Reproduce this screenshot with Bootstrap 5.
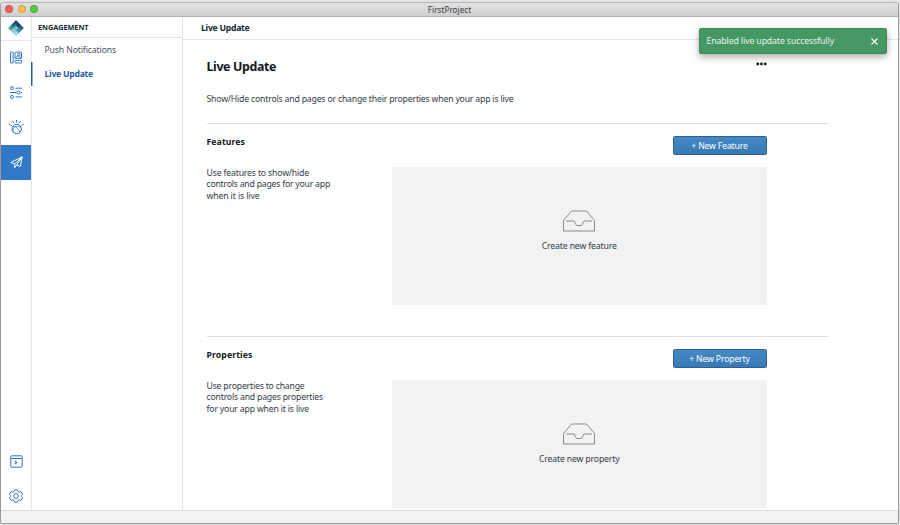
<!DOCTYPE html>
<html lang="en">
<head>
<meta charset="utf-8">
<meta name="viewport" content="width=device-width, initial-scale=1">
<title>FirstProject</title>
<link href="https://cdn.jsdelivr.net/npm/bootstrap@5.3.0/dist/css/bootstrap.min.css" rel="stylesheet">
<style>
html,body{height:100%}
body{font:8.7px/11.5px "Noto Sans","Open Sans",sans-serif;color:#323c47;background:#e4e4e4;overflow:hidden;padding:2px 1px 1px 0}
.window{height:522px;border:1px solid #9b9b9b;border-top-color:#b5b5b5;border-radius:4px 4px 2px 2px;background:#fff}
.titlebar{height:14px;background:linear-gradient(#e2e2e2,#cecece);border-bottom:1px solid #b4b4b4;flex:none;font-size:8.2px;line-height:13px;color:#3c3c3c}
.lights{left:4px;top:2px;gap:4.6px}
.lights i{width:8px;height:8px;border-radius:50%;border:.5px solid #0002}
.rail{width:31px;border-right:1px solid #e3e5e7;color:#3178c6;flex:none}
.rail a{height:35px;color:inherit;padding-bottom:1px}
.rail a.current{background:#3178c6;color:#fff}
.rail .brand{height:24px;border-bottom:1px solid #e3e5e7;margin-bottom:-1px;padding-bottom:1px}
.rail svg{fill:none;stroke:currentColor;stroke-width:1;display:block}
.rail .tools{margin-bottom:-4px}
.side{width:151px;border-right:1px solid #e3e5e7;flex:none}
.side h2{font-size:7.3px;line-height:21px;height:21px;color:#152935;padding-left:6px;border-bottom:1px solid #e3e5e7}
.side a{height:24px;line-height:24px;padding-left:12.5px;color:#4a545d}
.side a.current{color:#2a5caa;box-shadow:-1px 0 #2a5caa,inset .5px 0 #2a5caa}
.crumb{height:23px;line-height:22px;border-bottom:1px solid #e3e5e7;padding-left:18px;color:#152935}
.content{padding-left:23.5px;height:468px}
.intro{height:83px;width:622.5px;color:#323c47}
.intro h1{font-size:12.4px;line-height:16px;color:#111920;padding-top:19px}
.intro p{margin-top:19px}
.dots{padding:22px 62px 0 0}
.block{width:622.5px;height:213px;border-top:1px solid #dedfe0}
.block h3{font-size:8.7px;line-height:12px;color:#111920;margin:12px 0 0}
.block p{margin-top:20px;line-height:11.3px}
.about{width:185.5px}
.panel{width:374.5px}
.btn-new{width:94px;height:19px;margin-top:12px;background:linear-gradient(#4789c3,#3679b5);border:1px solid #27639b;border-radius:1.5px;color:#fff;font-size:8.7px;line-height:17px;padding:1px 0 0}
.btn-new:hover{color:#fff}
.blank{height:138px;margin-top:12px;background:#f2f2f2;border-radius:2px;padding-top:43px}
.blank svg{fill:none;stroke:#8b8b8b;margin-bottom:9px}
.statusbar{height:13px;background:#f2f2f2;border-top:1px solid #dcdcdc;flex:none}
.notice{left:699px;top:28px;width:188px;height:26px;background:#459763;border:1px solid #3b8a58;border-radius:2px;color:#e9f4ed;box-shadow:0 3px 7px #0005;padding:0 8px 0 6.5px}
.notice .t{padding-top:2px}
.t{white-space:nowrap;display:inline-block}
</style>
<script src="https://cdn.jsdelivr.net/npm/bootstrap@5.3.0/dist/js/bootstrap.bundle.min.js"></script>
</head>
<body>
<div class="window d-flex flex-column overflow-hidden">
  <header class="titlebar position-relative text-center">
    <div class="lights position-absolute d-flex"><i style="background:#ee6258"></i><i style="background:#f6bd4a"></i><i style="background:#5ac648"></i></div>
    <span class="t" data-w="43.5">FirstProject</span>
  </header>
  <div class="d-flex flex-grow-1 overflow-hidden">
    <nav class="rail d-flex flex-column">
      <div class="brand d-flex justify-content-center align-items-center">
        <svg width="16" height="16" viewBox="0 0 16 16"><g style="stroke:none">
          <path fill="#5fa9c0" d="M8 .3L15.7 8 8 15.7.3 8z"/>
          <path fill="#1b4477" d="M8 .3l2.6 2.5L8 5.4 5.4 2.8z"/><path fill="#2c668b" d="M5.4 2.8L8 5.4 5.4 8 2.8 5.4z"/><path fill="#153c6b" d="M10.6 2.8l2.6 2.6L10.6 8 8 5.4z"/>
          <path fill="#3a9d9c" d="M2.8 5.4L5.4 8l-2.6 2.6L.3 8z"/><path fill="#75b9cd" d="M8 5.4L10.6 8 8 10.6 5.4 8z"/><path fill="#34618c" d="M13.2 5.4L15.7 8l-2.5 2.6L10.6 8z"/>
          <path fill="#8bcdcf" d="M5.4 8L8 10.6l-2.6 2.6-2.6-2.6z"/><path fill="#3c91af" d="M10.6 8l2.6 2.6-2.6 2.6L8 10.6z"/><path fill="#a8d9dc" d="M8 10.6l2.6 2.6L8 15.7l-2.6-2.5z"/></g></svg>
      </div>
      <a href="#" class="d-flex justify-content-center align-items-center">
        <svg width="12" height="13" viewBox="0 0 12 13"><rect x=".5" y="1" width="2.6" height="11" rx=".4"/><rect x="5" y="1" width="6.5" height="6.4" rx=".4"/><rect x="5" y="9.4" width="6.5" height="2.6" rx=".4"/><circle cx="8.9" cy="3.6" r="1.3"/><path d="M5 7l3-2.4L11 7"/></svg></a>
      <a href="#" class="d-flex justify-content-center align-items-center">
        <svg width="12" height="13" viewBox="0 0 12 13"><circle cx="2" cy="2.2" r="1.5"/><path d="M5.5 2.2H12M0 6.5h6.5M10.5 6.5H12M5.5 10.9H12"/><circle cx="8.5" cy="6.5" r="1.6"/><circle cx="2" cy="10.9" r="1.5"/></svg></a>
      <a href="#" class="d-flex justify-content-center align-items-center">
        <svg width="15" height="15" viewBox="0 0 15 15"><circle cx="7.7" cy="9" r="4.7"/><path d="M4 7c2-2 5 1 6.8 5.2M5.2 12.6C3 10.5 4 7.5 7 6.4c2-.6 3.6 0 4.5 1.4" stroke-width=".8"/><path d="M7.5 0v2.5M3.5 1l1.3 2.3M11.5 1l-1.3 2.3M.3 4.3l2.3 1.2M14.7 4.3l-2.3 1.2"/></svg></a>
      <a href="#" class="current d-flex justify-content-center align-items-center">
        <svg width="13" height="13" viewBox="0 0 13 13" stroke-linejoin="round"><path d="M.8 6.5L12.2.8 10.3 10.6 6.7 8.9 4.7 11.8V8zM12.2.8L4.7 8M12.2.8L6.7 8.9"/></svg></a>
      <div class="tools mt-auto">
      <a href="#" class="d-flex justify-content-center align-items-center">
        <svg width="13" height="13" viewBox="0 0 13 13"><rect x=".8" y=".8" width="11.4" height="11.4" rx=".8"/><path d="M.8 3.5h11.4M4.8 6l2 1.5-2 1.5" stroke-width="1.1"/></svg></a>
      <a href="#" class="d-flex justify-content-center align-items-center">
        <svg width="14" height="14" viewBox="0 0 14 14" stroke-linejoin="round"><path d="M5.5.8h3l.5 1.7 1.2.7 1.8-.5 1.5 2.6-1.2 1.3v.8l1.2 1.3-1.5 2.6-1.8-.5-1.2.7-.5 1.7h-3L5 11.5l-1.2-.7-1.8.5L.5 8.7l1.2-1.3v-.8L.5 5.3 2 2.7l1.8.5L5 2.5z"/><circle cx="7" cy="7" r="2.4"/></svg></a>
      </div>
    </nav>
    <aside class="side">
      <h2 class="fw-bold mb-0"><span class="t" data-w="50.5">ENGAGEMENT</span></h2>
      <nav class="d-flex flex-column">
        <a href="#" class="text-decoration-none"><span class="t" data-w="71.5">Push Notifications</span></a>
        <a href="#" class="current text-decoration-none fw-bold"><span class="t" data-w="48.5">Live Update</span></a>
      </nav>
    </aside>
    <main class="flex-grow-1">
      <div class="crumb fw-bold"><span class="t" data-w="48.5">Live Update</span></div>
      <div class="content overflow-hidden">
        <div class="intro d-flex justify-content-between">
          <div><h1 class="fw-bold mb-0"><span class="t" data-w="69.5">Live Update</span></h1>
          <p class="mb-0"><span class="t" data-w="307">Show/Hide controls and pages or change their properties when your app is live</span></p></div>
          <div class="dots"><svg class="d-block" width="11" height="4" viewBox="0 0 11 4" fill="#111920"><circle cx="1.8" cy="2" r="1.4"/><circle cx="5.5" cy="2" r="1.4"/><circle cx="9.2" cy="2" r="1.4"/></svg></div>
        </div>
        <section class="block d-flex">
          <div class="about"><h3 class="fw-bold"><span class="t" data-w="38.5">Features</span></h3>
            <p class="mb-0"><span class="t" data-w="102.5">Use features to show/hide</span><br><span class="t" data-w="123.5">controls and pages for your app</span><br><span class="t" data-w="53">when it is live</span></p></div>
          <div class="panel d-flex flex-column">
            <button class="btn btn-new align-self-end"><span class="t" data-w="56.5">+ New Feature</span></button>
            <div class="blank d-flex flex-column align-items-center">
              <svg width="32" height="22" viewBox="0 0 32 22"><path d="M.5 10.5L8.5 1h15l8 9.5v10.5H.5zM3 11h8l2.5 4.5h5L21 11h8"/></svg>
              <span class="t" data-w="75">Create new feature</span>
            </div>
          </div>
        </section>
        <section class="block d-flex">
          <div class="about"><h3 class="fw-bold"><span class="t" data-w="46">Properties</span></h3>
            <p class="mb-0"><span class="t" data-w="98">Use properties to change</span><br><span class="t" data-w="116.5">controls and pages properties</span><br><span class="t" data-w="102.5">for your app when it is live</span></p></div>
          <div class="panel d-flex flex-column">
            <button class="btn btn-new align-self-end"><span class="t" data-w="60.5">+ New Property</span></button>
            <div class="blank d-flex flex-column align-items-center">
              <svg width="32" height="22" viewBox="0 0 32 22"><path d="M.5 10.5L8.5 1h15l8 9.5v10.5H.5zM3 11h8l2.5 4.5h5L21 11h8"/></svg>
              <span class="t" data-w="80.5">Create new property</span>
            </div>
          </div>
        </section>
      </div>
    </main>
  </div>
  <footer class="statusbar"></footer>
</div>
<div class="notice position-absolute d-flex align-items-center justify-content-between" role="alert">
  <span class="t" data-w="127.5">Enabled live update successfully</span>
  <svg width="7" height="7" viewBox="0 0 7 7" stroke="#fff" stroke-width="1.2"><path d="M.5.5l6 6M6.5.5l-6 6"/></svg>
</div>
<script>
// Track each label so its line fills the measure given in data-w.
document.querySelectorAll('.t').forEach(function (el) {
  var gap = (el.dataset.w - el.getBoundingClientRect().width) / el.textContent.length;
  el.style.letterSpacing = gap.toFixed(3) + 'px';
});
</script>
</body>
</html>
